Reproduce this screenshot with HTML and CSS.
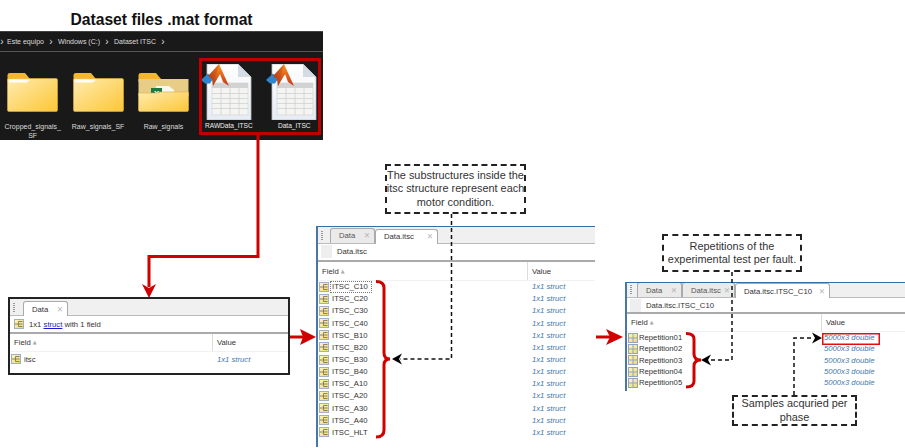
FILE: index.html
```html
<!DOCTYPE html>
<html lang="en">
<head>
    <meta charset="UTF-8">
    <title>Dataset files .mat format</title>
    <link rel="stylesheet" href="styles.css">
</head>
<body>
    <svg class="defs" width="0" height="0">
        <defs>
            <linearGradient id="folderFront" x1="0" y1="0" x2="1" y2="1">
                <stop offset="0" stop-color="#ffecb0"/>
                <stop offset="1" stop-color="#fcc636"/>
            </linearGradient>
            <linearGradient id="docFill" x1="0" y1="0" x2="0" y2="1">
                <stop offset="0" stop-color="#ffffff"/>
                <stop offset="1" stop-color="#e6ecf4"/>
            </linearGradient>
            <linearGradient id="peakFill" x1="0" y1="0" x2="0" y2="1">
                <stop offset="0" stop-color="#f79a22"/>
                <stop offset="1" stop-color="#cc3216"/>
            </linearGradient>
            <linearGradient id="flankFill" x1="1" y1="0" x2="0" y2="1">
                <stop offset="0" stop-color="#f0781a"/>
                <stop offset="1" stop-color="#a02c18"/>
            </linearGradient>
            <linearGradient id="structFill" x1="0" y1="0" x2="1" y2="1">
                <stop offset="0" stop-color="#fff6c0"/>
                <stop offset="1" stop-color="#f0d76c"/>
            </linearGradient>
            <symbol id="folder" viewBox="0 0 51 40">
                <path d="M0.500 8 V3 Q0.500 1 3 1 H18 L23 7 V10 H0.500 Z" fill="#f3b62e"/>
                <path d="M0.500 8 Q0.500 6.500 2 6.500 H49 Q50.500 6.500 50.500 8 V38 Q50.500 39.500 49 39.500 H2 Q0.500 39.500 0.500 38 Z" fill="url(#folderFront)" stroke="#e3b03a" stroke-width="0.600"/>
                <path d="M2 7.500 H23 L20 10.500 H2 Z" fill="#fffdf4"/>
            </symbol>
            <symbol id="folderXls" viewBox="0 0 51 40">
                <path d="M0.500 8 V3 Q0.500 1 3 1 H18 L23 7 V10 H0.500 Z" fill="#f3b62e"/>
                <path d="M0.500 7 H50.500 V24 H0.500 Z" fill="#e8cd86"/>
                <path d="M18 14 H31 L36 18 V26 H18 Z" fill="#f6f6f2"/>
                <rect x="13" y="16" width="11" height="10" fill="#1a7a42"/>
                <text x="16" y="24" class="xls">X</text>
                <rect x="27" y="20" width="6" height="2" fill="#3d9a63"/>
                <path d="M0.500 21 L20 21 L22 20 H50.500 V38 Q50.500 39.500 49 39.500 H2 Q0.500 39.500 0.500 38 Z" fill="url(#folderFront)" stroke="#e3b03a" stroke-width="0.600"/>
            </symbol>
            <symbol id="matFile" viewBox="0 0 56 56">
                <path d="M6 0 H37 L50 13 V56 H6 Z" fill="url(#docFill)" stroke="#b9bec6" stroke-width="0.800"/>
                <path d="M37 0 V13 H50 Z" fill="#d5dbe3"/>
                <rect x="11" y="19" width="36" height="32" fill="#f4f4f2" stroke="#cfcfcf" stroke-width="0.600"/>
                <rect x="11" y="19" width="36" height="5" fill="#d2d2d2"/>
                <path d="M11 29.500 H47 M11 34.500 H47 M11 39.500 H47 M11 44.500 H47 M20 19 V51 M29 19 V51 M38 19 V51" stroke="#d0d0d0" stroke-width="0.800" fill="none"/>
                <path d="M0 16 L7 9.500 L12 15 L9 19.500 L4 19.500 Z" fill="#2f86cc"/>
                <path d="M7 12 L18 0 L19 10 L12 22 L11 15 Z" fill="url(#flankFill)"/>
                <path d="M18 0 L28 22 L22 18 L19 10 L14 16 Z" fill="url(#peakFill)"/>
            </symbol>
            <symbol id="structIcon" viewBox="0 0 10 10">
                <rect x="0.500" y="0.500" width="9" height="9" fill="url(#structFill)" stroke="#9fb2c4" stroke-width="1"/>
                <path d="M1 5 H4.500 M4.500 2.500 H8.500 M4.500 5 H8.500 M4.500 7.500 H8.500 M4.500 2.500 V7.500" stroke="#7b7a55" stroke-width="0.900" fill="none"/>
            </symbol>
            <symbol id="gridIcon" viewBox="0 0 10 10">
                <rect x="0.500" y="0.500" width="9" height="9" fill="url(#structFill)" stroke="#8da6c0" stroke-width="1"/>
                <path d="M5 0.500 V9.500 M0.500 5 H9.500" stroke="#8da6c0" stroke-width="1" fill="none"/>
            </symbol>
        </defs>
    </svg>

    <h1 class="title">Dataset files .mat format</h1>

    <section class="explorer">
        <div class="crumbs">
            <span class="chev">›</span><span>Este equipo</span><span class="chev">›</span><span>Windows (C:)</span><span class="chev">›</span><span>Dataset ITSC</span><span class="chev">›</span>
        </div>
        <div class="files">
            <div class="file"><svg class="folder-icon"><use href="#folder"/></svg><span>Cropped_signals_<br>SF</span></div>
            <div class="file"><svg class="folder-icon"><use href="#folder"/></svg><span>Raw_signals_SF</span></div>
            <div class="file"><svg class="folder-icon"><use href="#folderXls"/></svg><span>Raw_signals</span></div>
            <div class="file mat"><svg class="mat-icon"><use href="#matFile"/></svg><span>RAWData_ITSC</span></div>
            <div class="file mat"><svg class="mat-icon"><use href="#matFile"/></svg><span>Data_ITSC</span></div>
        </div>
    </section>

    <section class="win win-data">
        <div class="tabs">
            <i class="grip"></i>
            <div class="tab active">Data <b>✕</b></div>
        </div>
        <div class="path"><svg class="icon"><use href="#structIcon"/></svg><span>1x1 <a>struct</a> with 1 field</span></div>
        <div class="head"><div class="head-field">Field <em>▲</em></div><div class="head-value">Value</div></div>
        <div class="rows">
            <div class="row"><svg class="icon"><use href="#structIcon"/></svg><span class="name">itsc</span><span class="val">1x1 struct</span></div>
        </div>
    </section>

    <section class="win win-itsc">
        <div class="tabs">
            <i class="grip"></i>
            <div class="tab">Data <b>✕</b></div>
            <div class="tab active">Data.itsc <b>✕</b></div>
        </div>
        <div class="path"><i class="blank"></i><span>Data.itsc</span></div>
        <div class="head"><div class="head-field">Field <em>▲</em></div><div class="head-value">Value</div></div>
        <div class="rows">
            <div class="row"><svg class="icon"><use href="#structIcon"/></svg><span class="name focus">ITSC_C10</span><span class="val">1x1 struct</span></div>
            <div class="row"><svg class="icon"><use href="#structIcon"/></svg><span class="name">ITSC_C20</span><span class="val">1x1 struct</span></div>
            <div class="row"><svg class="icon"><use href="#structIcon"/></svg><span class="name">ITSC_C30</span><span class="val">1x1 struct</span></div>
            <div class="row"><svg class="icon"><use href="#structIcon"/></svg><span class="name">ITSC_C40</span><span class="val">1x1 struct</span></div>
            <div class="row"><svg class="icon"><use href="#structIcon"/></svg><span class="name">ITSC_B10</span><span class="val">1x1 struct</span></div>
            <div class="row"><svg class="icon"><use href="#structIcon"/></svg><span class="name">ITSC_B20</span><span class="val">1x1 struct</span></div>
            <div class="row"><svg class="icon"><use href="#structIcon"/></svg><span class="name">ITSC_B30</span><span class="val">1x1 struct</span></div>
            <div class="row"><svg class="icon"><use href="#structIcon"/></svg><span class="name">ITSC_B40</span><span class="val">1x1 struct</span></div>
            <div class="row"><svg class="icon"><use href="#structIcon"/></svg><span class="name">ITSC_A10</span><span class="val">1x1 struct</span></div>
            <div class="row"><svg class="icon"><use href="#structIcon"/></svg><span class="name">ITSC_A20</span><span class="val">1x1 struct</span></div>
            <div class="row"><svg class="icon"><use href="#structIcon"/></svg><span class="name">ITSC_A30</span><span class="val">1x1 struct</span></div>
            <div class="row"><svg class="icon"><use href="#structIcon"/></svg><span class="name">ITSC_A40</span><span class="val">1x1 struct</span></div>
            <div class="row"><svg class="icon"><use href="#structIcon"/></svg><span class="name">ITSC_HLT</span><span class="val">1x1 struct</span></div>
        </div>
    </section>

    <section class="win win-c10">
        <div class="tabs">
            <i class="grip"></i>
            <div class="tab">Data <b>✕</b></div>
            <div class="tab">Data.itsc <b>✕</b></div>
            <div class="tab active">Data.itsc.ITSC_C10 <b>✕</b></div>
        </div>
        <div class="path"><i class="blank"></i><span>Data.itsc.ITSC_C10</span></div>
        <div class="head"><div class="head-field">Field <em>▲</em></div><div class="head-value">Value</div></div>
        <div class="rows">
            <div class="row"><svg class="icon"><use href="#gridIcon"/></svg><span class="name">Repetition01</span><span class="val">5000x3 double</span></div>
            <div class="row"><svg class="icon"><use href="#gridIcon"/></svg><span class="name">Repetition02</span><span class="val">5000x3 double</span></div>
            <div class="row"><svg class="icon"><use href="#gridIcon"/></svg><span class="name">Repetition03</span><span class="val">5000x3 double</span></div>
            <div class="row"><svg class="icon"><use href="#gridIcon"/></svg><span class="name">Repetition04</span><span class="val">5000x3 double</span></div>
            <div class="row"><svg class="icon"><use href="#gridIcon"/></svg><span class="name">Repetition05</span><span class="val">5000x3 double</span></div>
        </div>
    </section>

    <!-- connectors and braces go over the windows -->
    <svg class="links" viewBox="0 0 905 448">
        <g fill="none" stroke="#d10000" stroke-width="3">
            <rect x="200.500" y="59.500" width="119" height="74" stroke="#c00000"/>
            <path d="M258 135 V256.500 H149 V287"/>
            <path d="M290 337 H303"/>
            <path d="M596 337 H610"/>
            <path d="M376 281.500 Q384 281.500 384 288 V353 Q384 359 390 359 Q384 359 384 365 V430 Q384 437 376 437"/>
            <path d="M686 333.500 Q694 333.500 694 339 V354 Q694 360 701 360 Q694 360 694 366 V381 Q694 387 686 387"/>
        </g>
        <g fill="#d10000">
            <path d="M142 284 L149 288 L156 284 L149 298 Z"/>
            <path d="M300 329 L316 337 L300 345 L303 337 Z"/>
            <path d="M606 329 L623 337 L606 345 L610 337 Z"/>
        </g>
        <rect x="822.750" y="333.750" width="56.500" height="10.500" fill="none" stroke="#e01010" stroke-width="1.500"/>
        <g fill="none" stroke="#111" stroke-width="1.500" stroke-dasharray="4 3">
            <path d="M451.500 214 V359 H400"/>
            <path d="M732 272 V360 H710"/>
            <path d="M794 395 V338 H814"/>
        </g>
        <g fill="#000">
            <path d="M392 359 L402 353.500 L399 359 L402 364.500 Z"/>
            <path d="M701 360 L711 354.500 L708 360 L711 365.500 Z"/>
            <path d="M822 338 L812 332.500 L815 338 L812 343.500 Z"/>
        </g>
    </svg>

    <div class="note note-sub">The substructures inside the<br>itsc structure represent each<br>motor condition.</div>
    <div class="note note-rep">Repetitions of the<br>experimental test per fault.</div>
    <div class="note note-samples">Samples acquried per<br>phase</div>
</body>
</html>
```

FILE: styles.css
```css
html, body {
    margin: 0;
    padding: 0;
    background: #fff;
}
body {
    position: relative;
    width: 905px;
    height: 448px;
    overflow: hidden;
    font-family: "Liberation Sans", Arial, sans-serif;
    color: #333;
}
.defs {
    position: absolute;
}
.xls {
    font: bold 8px "Liberation Sans", sans-serif;
    fill: #fff;
}
.title {
    position: absolute;
    left: 0;
    top: 10px;
    width: 323px;
    margin: 0;
    font: bold 15.700px/20px "Liberation Sans", Arial, sans-serif;
    color: #111;
    text-align: center;
}

/* file explorer strip */
.explorer {
    position: absolute;
    left: 0;
    top: 31px;
    width: 323px;
    height: 109px;
    background: #191919;
    color: #ddd;
    font-size: 7px;
    border-top: 1px solid #444;
    box-sizing: border-box;
}
.crumbs {
    display: flex;
    align-items: center;
    height: 19px;
    border-bottom: 1px solid #555;
    gap: 3px;
    white-space: nowrap;
}
.chev {
    width: 8px;
    text-align: center;
    font-size: 10px;
    line-height: 10px;
}
.chev:first-child {
    width: 4px;
}
.files {
    display: flex;
    padding-top: 19px;
}
.file {
    display: flex;
    flex-direction: column;
    align-items: center;
    width: 65.400px;
    flex: none;
    line-height: 8.500px;
    text-align: center;
}
.file span {
    width: 64px;
    margin-top: 11px;
}
.folder-icon {
    width: 51px;
    height: 40px;
    margin-top: 1px;
}
.file.mat {
    color: #eee;
    font-size: 6.600px;
}
.file.mat span {
    margin-top: 2px;
    white-space: nowrap;
}
.mat-icon {
    width: 56px;
    height: 56px;
    margin-top: -7px;
}

/* variable editor windows */
.win {
    position: absolute;
    box-sizing: border-box;
    background: #fff;
    font-size: 7.700px;
    color: #333;
    overflow: hidden;
}
.win-data {
    left: 8px;
    top: 297px;
    width: 282px;
    height: 78px;
    border: 2px solid #222;
    --tabs: 17px;
    --path: 18px;
    --head: 18px;
    --row: 14px;
    --split: 203px;
    --grip: 8px;
    --val: 4px;
    --name: 3px;
}
.win-itsc {
    left: 316px;
    top: 226px;
    width: 279px;
    height: 221px;
    border-left: 2px solid #4a76a8;
    border-top: 1.500px solid #2f6fb0;
    --tabs: 16.500px;
    --path: 18px;
    --head: 19px;
    --row: 12.170px;
    --split: 210px;
    --grip: 7px;
    --val: 4px;
    --name: 3px;
}
.win-c10 {
    left: 625px;
    top: 282px;
    width: 280px;
    height: 109px;
    border-left: 2px solid #4a76a8;
    border-top: 1.500px solid #2f6fb0;
    --tabs: 15px;
    --path: 16px;
    --head: 18px;
    --row: 11.300px;
    --split: 195px;
    --grip: 5px;
    --val: 2px;
    --name: 1px;
}
.tabs {
    display: flex;
    align-items: flex-end;
    height: var(--tabs);
    background: #f0f0f0;
    border-bottom: 1px solid #bbb;
    box-sizing: border-box;
}
.grip {
    width: 2px;
    height: 10px;
    margin: 0 var(--grip) 2px 3px;
    background: repeating-linear-gradient(#999 0 1px, transparent 1px 2px);
}
.tab {
    display: flex;
    align-items: center;
    justify-content: space-between;
    width: 45px;
    height: 15px;
    box-sizing: border-box;
    padding: 0 4px 0 8px;
    background: #eaeaea;
    border: 1px solid #aaa;
    border-bottom: none;
    border-radius: 3px 3px 0 0;
    color: #555;
}
.tab.active {
    background: #fff;
    color: #333;
    margin-bottom: -1px;
}
.win-itsc .tab:nth-child(3) {
    width: 63px;
}
.win-c10 .tab:nth-child(3) {
    width: 53px;
}
.win-c10 .tab:nth-child(4) {
    width: 95px;
}
.tab b {
    font: bold 7.500px "DejaVu Sans", sans-serif;
    color: #b5b5b5;
}
.path {
    display: flex;
    align-items: center;
    gap: 5px;
    height: var(--path);
    box-sizing: border-box;
    padding-left: 3px;
    border-bottom: 2px solid #aaa;
}
.path a {
    color: #1a1ad0;
    text-decoration: underline;
}
.blank {
    width: 11px;
    height: 13px;
    background: #eeeeee;
}
.head {
    display: flex;
    height: var(--head);
    box-sizing: border-box;
    border-bottom: 1px solid #f2f2f2;
    line-height: var(--head);
}
.head-field {
    width: var(--split);
    padding-left: 4px;
    box-sizing: border-box;
    border-right: 1px solid #dcdcdc;
}
.head-field em {
    font: normal 5px "DejaVu Sans", sans-serif;
    color: #aaa;
    vertical-align: 1px;
}
.head-value {
    padding-left: 4px;
}
.row {
    display: flex;
    align-items: center;
    height: var(--row);
}
.icon {
    width: 10px;
    height: 10px;
    flex: none;
    margin-left: 1px;
}
.name {
    width: calc(var(--split) - 11px);
    flex: none;
    padding-left: var(--name);
    box-sizing: border-box;
}
.focus {
    position: relative;
}
.focus::after {
    content: "";
    position: absolute;
    left: 1px;
    top: -1px;
    width: 40px;
    height: 10px;
    border: 1px dotted #777;
}
.val {
    padding-left: var(--val);
    font-style: italic;
    color: #3f78ad;
}

/* dashed callouts */
.note {
    position: absolute;
    display: flex;
    align-items: center;
    justify-content: center;
    box-sizing: border-box;
    border: 2px dashed #222;
    background: #fff;
    font: 10.900px/13.300px "Liberation Sans", Arial, sans-serif;
    color: #333;
    text-align: center;
    white-space: nowrap;
}
.note-sub {
    left: 385px;
    top: 164px;
    width: 141px;
    height: 50px;
}
.note-rep {
    left: 662px;
    top: 234px;
    width: 140px;
    height: 38px;
}
.note-samples {
    left: 732px;
    top: 395px;
    width: 125px;
    height: 31px;
}
.links {
    position: absolute;
    left: 0;
    top: 0;
    width: 905px;
    height: 448px;
}
```
